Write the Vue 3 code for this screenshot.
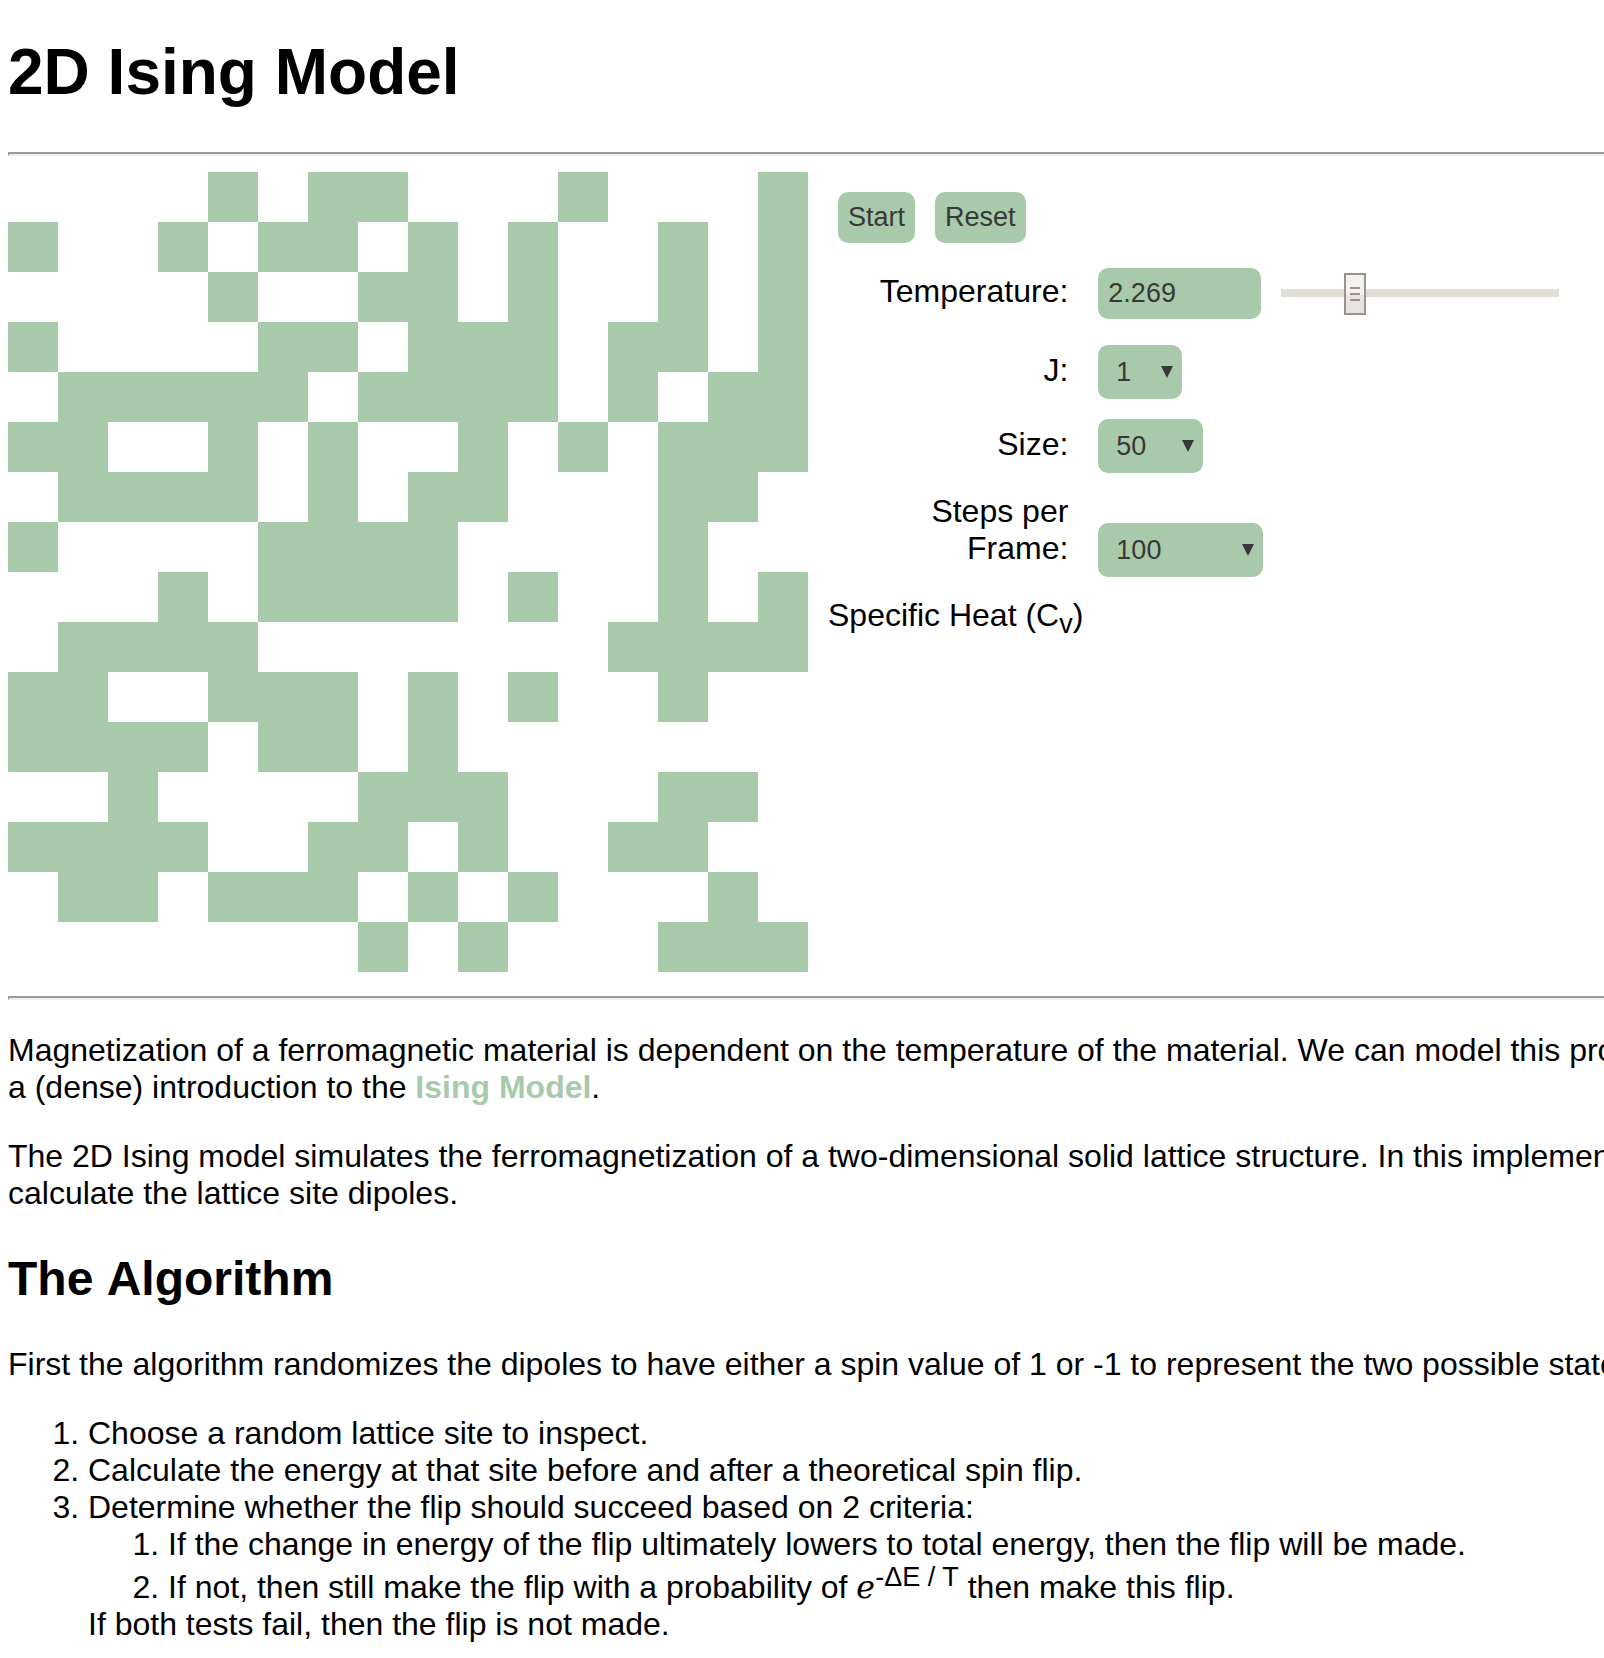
<script setup>
import { ref } from 'vue'

const lattice = [
  '0000101100010001',
  '1001011010100101',
  '0000100110100101',
  '1000011011101101',
  '0111110111101011',
  '1100101001010111',
  '0111101011000110',
  '1000011110000100',
  '0001011110100101',
  '0111100000001111',
  '1100111010100100',
  '1111011010000000',
  '0010000111000110',
  '1111001101001100',
  '0110111010100010',
  '0000000101000111',
]

// One closed square per up-spin site
const spins = lattice
  .flatMap((row, y) => [...row].map((s, x) => (s === '1' ? `M${x} ${y}h1v1h-1z` : '')))
  .join('')

const temperature = ref('2.269')
const coupling = ref('1')
const size = ref('50')
const steps = ref('100')
</script>

<template>
  <main class="page">
    <h1>2D Ising Model</h1>
    <hr />
    <section class="sim">
      <svg class="lattice" viewBox="0 0 16 16" role="img" aria-label="Lattice" shape-rendering="crispEdges">
        <path :d="spins" fill="#a9caaa" />
      </svg>
      <div class="controls">
        <div class="buttons">
          <button type="button">Start</button>
          <button type="button">Reset</button>
        </div>
        <div class="fields">
          <label class="temp" for="temperature">Temperature:</label>
          <div class="field temp">
            <input id="temperature" v-model="temperature" class="box" type="text" />
            <input v-model="temperature" class="slider" type="range" min="0" max="9.2" step="0.001" aria-label="Temperature" />
          </div>
          <label for="coupling">J:</label>
          <div class="field">
            <select id="coupling" v-model="coupling">
              <option>1</option>
              <option>-1</option>
            </select>
          </div>
          <label for="size">Size:</label>
          <div class="field">
            <select id="size" v-model="size">
              <option>50</option>
              <option>100</option>
              <option>200</option>
            </select>
          </div>
          <label for="steps">Steps per<br />Frame:</label>
          <div class="field">
            <select id="steps" v-model="steps">
              <option>100</option>
              <option>10000</option>
              <option>1000000</option>
            </select>
          </div>
          <div class="heat">Specific Heat (C<sub>v</sub>)</div>
        </div>
      </div>
    </section>
    <hr />
    <p>
      Magnetization of a ferromagnetic material is dependent on the temperature of the material. We can model this process<br />
      a (dense) introduction to the <a href="#">Ising Model</a>.
    </p>
    <p>
      The 2D Ising model simulates the ferromagnetization of a two-dimensional solid lattice structure. In this implementation<br />
      calculate the lattice site dipoles.
    </p>
    <h2>The&nbsp;Algorithm</h2>
    <p>First the algorithm randomizes the dipoles to have either a spin value of 1 or -1 to represent the two possible states</p>
    <ol>
      <li>Choose a random lattice site to inspect.</li>
      <li>Calculate the energy at that site before and after a theoretical spin flip.</li>
      <li>
        Determine whether the flip should succeed based on 2 criteria:
        <ol>
          <li>If the change in energy of the flip ultimately lowers to total energy, then the flip will be made.</li>
          <li>If not, then still make the flip with a probability of <span class="euler">&#x212F;</span><sup>-ΔE / T</sup> then make this flip.</li>
        </ol>
        If both tests fail, then the flip is not made.
      </li>
    </ol>
  </main>
</template>

<style>
body {
  margin: 0;
  background: #fff;
}
</style>

<style scoped>
.page {
  padding: 35px 0 0 8px;
  overflow: hidden;
  font: 32px/37px "Liberation Sans", Arial, sans-serif;
  color: #000;
  white-space: nowrap;
}

h1 {
  margin: 0 0 43px;
  font-size: 64px;
  line-height: 74px;
}

h2 {
  margin: 40px 0;
  font-size: 48px;
  line-height: 54px;
}

hr {
  height: 0;
  margin: 0 -8px 0 0;
  border: 2px solid;
  border-color: #9a9a9a #eee #eee #9a9a9a;
}

p {
  margin: 32px 0;
}

a {
  color: #a9caaa;
  font-weight: bold;
  text-decoration: none;
}

.sim {
  display: flex;
  align-items: flex-start;
  gap: 20px;
  padding: 16px 0 24px;
}

.lattice {
  display: block;
  flex: none;
  width: 800px;
  height: 800px;
}

.buttons {
  display: flex;
  gap: 20px;
  padding: 20px 10px;
}

button,
.box,
select {
  box-sizing: border-box;
  margin: 0;
  padding: 10px;
  border: 0;
  border-radius: 10px;
  background: #a9caaa;
  color: #383838;
  font: 27px/31px "Liberation Sans", Arial, sans-serif;
}

.fields {
  display: grid;
  grid-template-columns: max-content max-content;
  gap: 20px 15px;
  align-items: last baseline;
}

label {
  padding-right: 15px;
  text-align: right;
}

.field {
  display: flex;
}

.temp {
  margin: 5px 0 6px;
}

.box {
  align-self: last baseline;
  width: 163px;
  height: 51px;
}

.slider {
  align-self: flex-start;
  appearance: none;
  width: 278px;
  height: 42px;
  margin: 5px 0 0 20px;
  background: linear-gradient(#e0dcd6, #e0dcd6) 0 16px / 100% 8px no-repeat;
}

.slider::-webkit-slider-thumb {
  appearance: none;
  box-sizing: border-box;
  width: 22px;
  height: 42px;
  border: 2px solid #9b938b;
  background:
    linear-gradient(#9b938b, #9b938b) 4px 12px / 10px 2px no-repeat,
    linear-gradient(#9b938b, #9b938b) 4px 18px / 10px 2px no-repeat,
    linear-gradient(#9b938b, #9b938b) 4px 24px / 10px 2px no-repeat,
    linear-gradient(#f4f2ef 20px, #e9e4e0 20px);
}

select {
  appearance: none;
  height: 54px;
  padding: 12px 41px 11px 18px;
  background: #a9caaa url("data:image/svg+xml,%3Csvg xmlns='http://www.w3.org/2000/svg' width='12' height='12'%3E%3Cpath d='M0 0h12L6 12z' fill='%23383838'/%3E%3C/svg%3E") right 9px center no-repeat;
}

sub,
sup {
  font-size: 27px;
  line-height: 28px;
}

ol {
  margin: 0;
  padding-left: 80px;
}

.euler {
  font-family: "DejaVu Sans", sans-serif;
  line-height: 1;
}
</style>
